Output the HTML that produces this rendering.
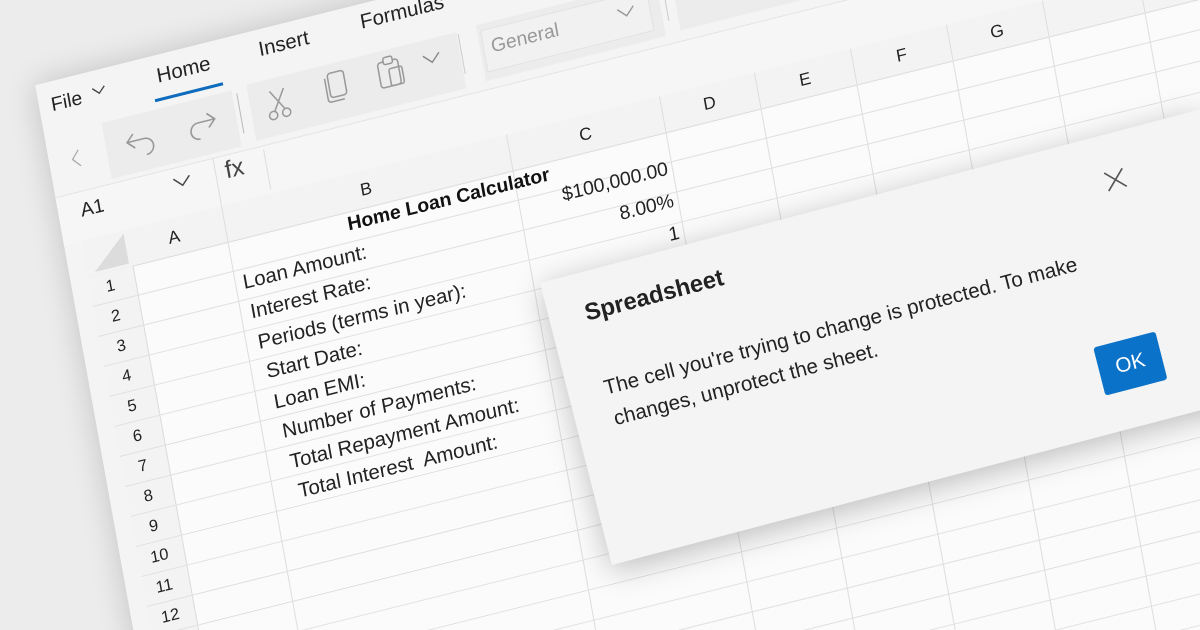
<!DOCTYPE html>
<html style="width:1200px;height:630px;overflow:hidden"><head><meta charset="utf-8"><style>
html,body{margin:0;padding:0}
body{width:1200px;height:630px;overflow:hidden;background:#ececec;position:relative;font-family:"Liberation Sans","DejaVu Sans",sans-serif;color:#222}
.wrap{position:absolute;left:0;top:0;width:1200px;height:630px;overflow:hidden}
.sheet{position:absolute;left:0;top:0;width:0;height:0;transform-origin:0 0;transform:matrix(1,-0.25,0.18,1,81,241)}
.sheet div,.sheet span,.sheet svg{position:absolute}
.t{white-space:nowrap;line-height:1}
.vl{width:1px;background:#dedede}
.dlg{position:absolute;left:0;top:0;width:660px;height:282px;transform-origin:0 0;transform:matrix(1,-0.263,0.255,1,540,283);background:#f4f4f4;box-shadow:0 6px 30px rgba(0,0,0,.25)}
.dlg div,.dlg svg{position:absolute}
</style></head><body>
<div class="wrap">
<div class="sheet">
  <div style="left:-17px;top:-160px;width:1500px;height:900px;background:#f4f4f4;box-shadow:0 0 30px rgba(0,0,0,.18)"></div>
  <div style="left:40px;top:-108px;width:130px;height:56px;background:#ececec"></div>
  <div style="left:185px;top:-110px;width:210px;height:56px;background:#ececec"></div>
  <div style="left:415px;top:-112px;width:180px;height:56px;background:#ececec"></div>
  <div style="left:610px;top:-114px;width:300px;height:56px;background:#ececec"></div>
  <div style="left:-17px;top:-48px;width:1500px;height:48px;background:#f6f6f6;border-top:1px solid #e4e4e4"></div>
  <div style="left:45px;top:36px;width:1450px;height:700px;background:#fbfbfb"></div>
  <div style="left:0;top:0;width:1500px;height:36px;background:#f3f3f3;border-bottom:1px solid #dcdcdc"></div>
  <div style="left:0;top:36px;width:45px;height:700px;background:#f3f3f3;border-right:1px solid #dcdcdc"></div>
  <div style="left:0;top:36px;width:1500px;height:700px;background:repeating-linear-gradient(to bottom,transparent 0 29px,#e2e2e2 29px 30px)"></div>
  <svg style="left:0;top:0" width="45" height="36"><polygon points="42,3 42,33 8,33" fill="#dcdcdc"/></svg>
  <div class="vl" style="left:140px;top:-48px;height:748px"></div>
  <div class="vl" style="left:425px;top:0;height:700px"></div>
  <div class="vl" style="left:578px;top:0;height:700px"></div>
  <div class="vl" style="left:673px;top:0;height:700px"></div>
  <div class="vl" style="left:769px;top:0;height:700px"></div>
  <div class="vl" style="left:865px;top:0;height:700px"></div>
  <div class="vl" style="left:961px;top:0;height:700px"></div>
  <div class="vl" style="left:1057px;top:0;height:700px"></div>
  <div class="vl" style="left:1153px;top:0;height:700px"></div>
  <div class="vl" style="left:1249px;top:0;height:700px"></div>
  <div class="vl" style="left:190px;top:-44px;height:40px"></div>
  <span class="t" style="left:84px;top:10px;font-size:17px">A</span>
  <span class="t" style="left:276px;top:10px;font-size:17px">B</span>
  <span class="t" style="left:495px;top:10px;font-size:17px">C</span>
  <span class="t" style="left:619px;top:10px;font-size:17px">D</span>
  <span class="t" style="left:715px;top:10px;font-size:17px">E</span>
  <span class="t" style="left:812px;top:10px;font-size:17px">F</span>
  <span class="t" style="left:906px;top:10px;font-size:17px">G</span>
  <span class="t" style="left:16px;top:43px;font-size:16px">1</span>
  <span class="t" style="left:16px;top:73px;font-size:16px">2</span>
  <span class="t" style="left:16px;top:103px;font-size:16px">3</span>
  <span class="t" style="left:16px;top:133px;font-size:16px">4</span>
  <span class="t" style="left:16px;top:163px;font-size:16px">5</span>
  <span class="t" style="left:16px;top:193px;font-size:16px">6</span>
  <span class="t" style="left:16px;top:223px;font-size:16px">7</span>
  <span class="t" style="left:16px;top:253px;font-size:16px">8</span>
  <span class="t" style="left:16px;top:283px;font-size:16px">9</span>
  <span class="t" style="left:12px;top:313px;font-size:16px">10</span>
  <span class="t" style="left:12px;top:343px;font-size:16px">11</span>
  <span class="t" style="left:12px;top:373px;font-size:16px">12</span>
  <span class="t" style="left:258px;top:39px;font-size:19px;font-weight:bold;color:#111">Home Loan Calculator</span>
  <span class="t" style="left:440px;top:62px;width:134px;text-align:right;font-size:19px">$100,000.00</span>
  <span class="t" style="left:440px;top:94px;width:134px;text-align:right;font-size:19px">8.00%</span>
  <span class="t" style="left:440px;top:126px;width:134px;text-align:right;font-size:19px">1</span>
  <span class="t" style="left:148px;top:69px;font-size:20px">Loan Amount:</span>
  <span class="t" style="left:150px;top:99px;font-size:20px">Interest Rate:</span>
  <span class="t" style="left:152px;top:130px;font-size:20px">Periods (terms in year):</span>
  <span class="t" style="left:155px;top:160px;font-size:20px">Start Date:</span>
  <span class="t" style="left:157px;top:191px;font-size:20px">Loan EMI:</span>
  <span class="t" style="left:160px;top:221px;font-size:20px">Number of Payments:</span>
  <span class="t" style="left:162px;top:252px;font-size:20px">Total Repayment Amount:</span>
  <span class="t" style="left:165px;top:282px;font-size:20px">Total Interest&nbsp; Amount:</span>
  <span class="t" style="left:-5px;top:-146px;font-size:19px">File</span>
  <svg style="left:35px;top:-146px" width="16" height="12"><path d="M2 3 L8 9 L14 3" fill="none" stroke="#444" stroke-width="1.3"/></svg>
  <span class="t" style="left:101px;top:-149px;font-size:20px">Home</span>
  <div style="left:95px;top:-118px;width:68px;height:3px;background:#0f6cbd"></div>
  <span class="t" style="left:203px;top:-150px;font-size:20px">Insert</span>
  <span class="t" style="left:305px;top:-152px;font-size:20px">Formulas</span>
  <svg style="left:2px;top:-92px" width="16" height="24"><path d="M11 4 L4 12 L11 20" fill="none" stroke="#aaa" stroke-width="1.3"/></svg>
  <svg style="left:58px;top:-96px" width="34" height="30"><path d="M10 6 L3 13 L10 20 M3 13 H20 A8 8 0 0 1 20 29" fill="none" stroke="#999" stroke-width="1.6"/></svg>
  <svg style="left:120px;top:-98px" width="34" height="30"><path d="M22 6 L29 13 L22 20 M29 13 H12 A8 8 0 0 0 12 29" fill="none" stroke="#999" stroke-width="1.6"/></svg>
  <div class="vl" style="left:174px;top:-104px;height:40px;background:#bbb"></div>
  <svg style="left:198px;top:-102px" width="30" height="36"><path d="M8 4 L20 24 M22 4 L10 24" fill="none" stroke="#999" stroke-width="1.5"/><circle cx="8" cy="28" r="4" fill="none" stroke="#999" stroke-width="1.5"/><circle cx="21" cy="28" r="4" fill="none" stroke="#999" stroke-width="1.5"/></svg>
  <svg style="left:256px;top:-104px" width="30" height="36"><rect x="8" y="3" width="16" height="24" rx="3" fill="none" stroke="#999" stroke-width="1.5"/><path d="M5 7 V28 A3 3 0 0 0 8 31 H21" fill="none" stroke="#999" stroke-width="1.5"/></svg>
  <svg style="left:310px;top:-106px" width="32" height="36"><rect x="4" y="7" width="20" height="25" rx="3" fill="none" stroke="#999" stroke-width="1.5"/><rect x="10" y="3" width="9" height="7" rx="2" fill="#ececec" stroke="#999" stroke-width="1.5"/><rect x="14" y="15" width="13" height="17" rx="2" fill="none" stroke="#999" stroke-width="1.5"/></svg>
  <svg style="left:356px;top:-98px" width="22" height="14"><path d="M3 3 L11 11 L19 3" fill="none" stroke="#888" stroke-width="1.4"/></svg>
  <div class="vl" style="left:396px;top:-108px;height:40px;background:#ccc"></div>
  <div style="left:418px;top:-106px;width:165px;height:40px;background:#f1f1f1;border:1px solid #e2e2e2"></div>
  <span class="t" style="left:426px;top:-97px;font-size:19px;color:#999">General</span>
  <svg style="left:550px;top:-96px" width="22" height="14"><path d="M3 3 L11 11 L19 3" fill="none" stroke="#999" stroke-width="1.4"/></svg>
  <div class="vl" style="left:600px;top:-110px;height:40px;background:#ccc"></div>
  <span class="t" style="left:5px;top:-38px;font-size:19px">A1</span>
  <svg style="left:96px;top:-40px" width="22" height="14"><path d="M3 3 L11 11 L19 3" fill="none" stroke="#444" stroke-width="1.5"/></svg>
  <span class="t" style="left:150px;top:-44px;font-size:24px;color:#444">fx</span>
</div>

<div class="dlg">
  <div class="t" style="left:35px;top:28px;font-size:23px;font-weight:600;color:#222">Spreadsheet</div>
  <svg style="left:553px;top:34px" width="22" height="22"><path d="M2 2 L20 20 M20 2 L2 20" stroke="#555" stroke-width="1.6"/></svg>
  <div class="t" style="left:35px;top:105px;font-size:20px;color:#222">The cell you're trying to change is protected. To make</div>
  <div class="t" style="left:37px;top:136px;font-size:20px;color:#222">changes, unprotect the sheet.</div>
  <div style="left:503px;top:197px;width:62px;height:48px;background:#0a72c9;border-radius:3px;color:#fff;font-size:20px;line-height:48px;text-align:center">OK</div>
</div>
</div>
</body></html>
